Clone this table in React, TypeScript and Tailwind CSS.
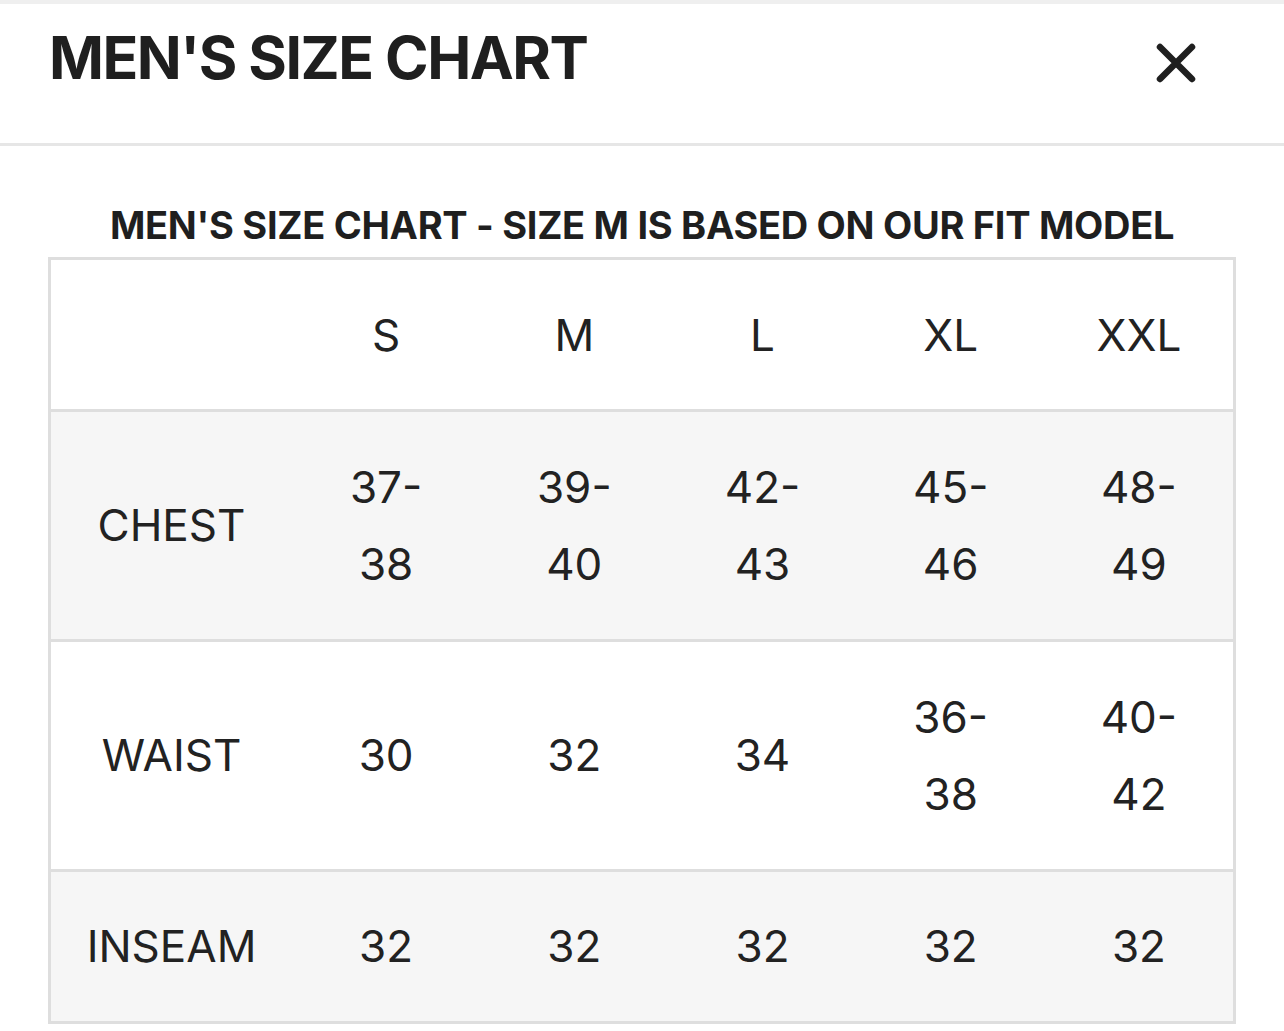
import React from 'react';

const sizes = ['S', 'M', 'L', 'XL', 'XXL'];

const rows = [
  { label: 'CHEST', values: [['37-', '38'], ['39-', '40'], ['42-', '43'], ['45-', '46'], ['48-', '49']], tall: true, shaded: true },
  { label: 'WAIST', values: [['30'], ['32'], ['34'], ['36-', '38'], ['40-', '42']], tall: true, shaded: false },
  { label: 'INSEAM', values: [['32'], ['32'], ['32'], ['32'], ['32']], tall: false, shaded: true },
];

const CloseIcon = () => (
  <svg width="40" height="40" viewBox="0 0 40 40" fill="none">
    <path d="M4 4 L36 36 M36 4 L4 36" stroke="#1f1f1f" strokeWidth="6.5" strokeLinecap="round" />
  </svg>
);

const App = () => {
  return (
    <div className="w-[1284px] h-[1031px] bg-white overflow-hidden text-[#222]" style={{ fontFamily: 'Inter, "Noto Sans", sans-serif' }}>
      <div className="h-[4px] bg-[#efefef]" />

      {/* modal header */}
      <div className="h-[142px] flex items-start justify-between pl-[49px] pr-[88px] pt-[24px] border-b-[3px] border-[#e6e6e6]">
        <h1 className="text-[59px] leading-none font-bold tracking-[-1.5px] text-[#1f1f1f]">MEN'S SIZE CHART</h1>
        <div className="mt-[15px]">
          <CloseIcon />
        </div>
      </div>

      <div className="pt-[60px] text-center">
        <h2 className="text-[38px] leading-none font-bold tracking-[-0.3px] text-[#1f1f1f]">
          MEN'S SIZE CHART - SIZE M IS BASED ON OUR FIT MODEL
        </h2>
      </div>

      <div className="ml-[48px] mt-[13px] w-[1188px] border-[3px] border-[#dedede]">
        <div className="grid grid-cols-[241px_repeat(5,1fr)] h-[149px] items-center text-[44px] leading-none">
          <div />
          {sizes.map((s) => (
            <div key={s} className="text-center">{s}</div>
          ))}
        </div>
        {rows.map((row) => (
          <div
            key={row.label}
            className={`grid grid-cols-[241px_repeat(5,1fr)] items-center border-t-[3px] border-[#dedede] text-[44px] leading-[77px] ${
              row.tall ? 'h-[230px]' : 'h-[152px]'
            } ${row.shaded ? 'bg-[#f6f6f6]' : 'bg-white'}`}
          >
            <div className="text-center">{row.label}</div>
            {row.values.map((v, i) => (
              <div key={i} className="text-center">
                {v.map((line, j) => (
                  <div key={j}>{line}</div>
                ))}
              </div>
            ))}
          </div>
        ))}
      </div>
    </div>
  );
};

export default App;
